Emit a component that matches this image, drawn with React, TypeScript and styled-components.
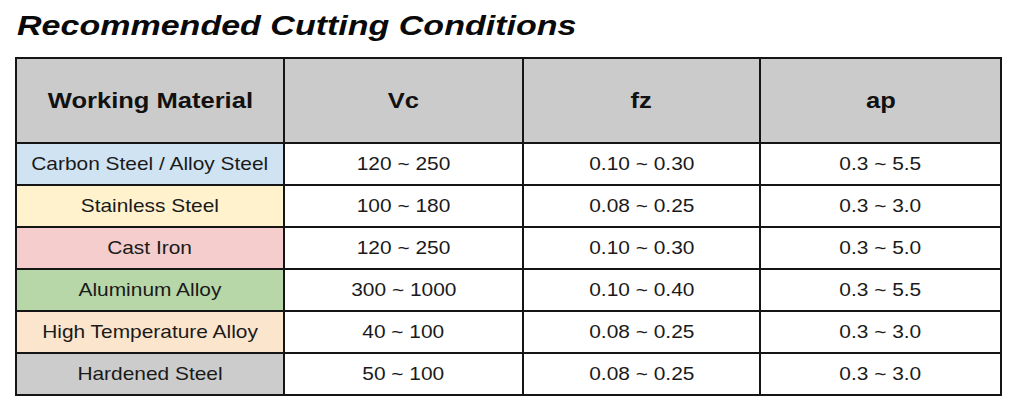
import React from "react";
import styled, { createGlobalStyle } from "styled-components";

const Global = createGlobalStyle`
  html, body { margin: 0; padding: 0; background: #ffffff; }
  body { font-family: "Liberation Sans", Arial, sans-serif; color: #111; }
`;

const Page = styled.div`
  padding: 10px 0 0 15px;
  width: 1009px;
`;

const Title = styled.h1`
  margin: 0 0 15px 2px;
  font-size: 28px;
  line-height: 32px;
  font-weight: 700;
  font-style: italic;
  color: #0a0a0a;
  white-space: nowrap;
`;

const Wide = styled.span<{ $sx: number; $origin?: string }>`
  display: inline-block;
  white-space: nowrap;
  transform: scaleX(${(p) => p.$sx});
  transform-origin: ${(p) => p.$origin || "center"};
`;

const Table = styled.table`
  border-collapse: collapse;
  table-layout: fixed;
  width: 985px;
`;

const HeadCell = styled.th`
  background: #cbcbcb;
  border: 2px solid #151515;
  height: 83px;
  padding: 0;
  font-size: 22px;
  font-weight: 700;
  text-align: center;
  color: #111;
`;

const Cell = styled.td<{ $bg?: string }>`
  background: ${(p) => p.$bg || "#ffffff"};
  border: 2px solid #151515;
  height: 40px;
  padding: 0;
  font-size: 19px;
  text-align: center;
  color: #1a1a1a;
`;

const rows = [
  { name: "Carbon Steel / Alloy Steel", bg: "#d0e3f3", vc: "120 ~ 250", fz: "0.10 ~ 0.30", ap: "0.3 ~ 5.5" },
  { name: "Stainless Steel", bg: "#fff2cd", vc: "100 ~ 180", fz: "0.08 ~ 0.25", ap: "0.3 ~ 3.0" },
  { name: "Cast Iron", bg: "#f4cdcc", vc: "120 ~ 250", fz: "0.10 ~ 0.30", ap: "0.3 ~ 5.0" },
  { name: "Aluminum Alloy", bg: "#b7d7a9", vc: "300 ~ 1000", fz: "0.10 ~ 0.40", ap: "0.3 ~ 5.5" },
  { name: "High Temperature Alloy", bg: "#fce5cd", vc: "40 ~ 100", fz: "0.08 ~ 0.25", ap: "0.3 ~ 3.0" },
  { name: "Hardened Steel", bg: "#cccccc", vc: "50 ~ 100", fz: "0.08 ~ 0.25", ap: "0.3 ~ 3.0" },
];

const BODY_SX = 1.1;
const HEAD_SX = 1.16;

export default function App() {
  return (
    <>
      <Global />
      <Page>
        <Title>
          <Wide $sx={1.215} $origin="left">Recommended Cutting Conditions</Wide>
        </Title>
        <Table>
          <colgroup>
            <col style={{ width: 268 }} />
            <col style={{ width: 239 }} />
            <col style={{ width: 237 }} />
            <col style={{ width: 241 }} />
          </colgroup>
          <thead>
            <tr>
              {["Working Material", "Vc", "fz", "ap"].map((h) => (
                <HeadCell key={h}>
                  <Wide $sx={HEAD_SX}>{h}</Wide>
                </HeadCell>
              ))}
            </tr>
          </thead>
          <tbody>
            {rows.map((r) => (
              <tr key={r.name}>
                <Cell $bg={r.bg}>
                  <Wide $sx={BODY_SX}>{r.name}</Wide>
                </Cell>
                <Cell>
                  <Wide $sx={BODY_SX}>{r.vc}</Wide>
                </Cell>
                <Cell>
                  <Wide $sx={BODY_SX}>{r.fz}</Wide>
                </Cell>
                <Cell>
                  <Wide $sx={BODY_SX}>{r.ap}</Wide>
                </Cell>
              </tr>
            ))}
          </tbody>
        </Table>
      </Page>
    </>
  );
}
